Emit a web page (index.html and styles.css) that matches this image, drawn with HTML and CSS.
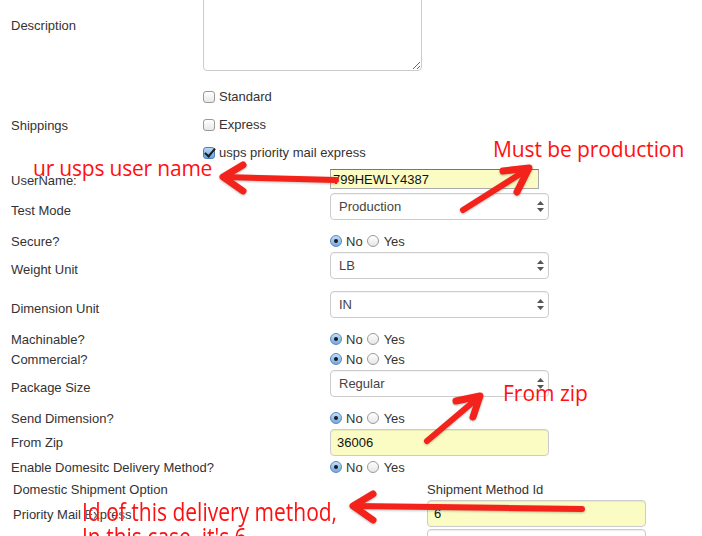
FILE: index.html
```html
<!DOCTYPE html>
<html lang="en">
<head>
  <meta charset="UTF-8" />
  <title>USPS shipping settings</title>
  <link rel="stylesheet" href="styles.css">
</head>
<body>
  <div class="page">
    <div class="basic">
      <div class="field desc">
        <span class="name">Description</span>
        <textarea></textarea>
      </div>
      <div class="field ships">
        <span class="name">Shippings</span>
        <div class="checks">
          <label class="check"><input type="checkbox"> Standard</label>
          <label class="check"><input type="checkbox"> Express</label>
          <label class="check"><input type="checkbox" checked> usps priority mail express</label>
        </div>
      </div>
    </div>

    <div class="usps">
      <div class="field user">
        <span class="name">UserName:</span>
        <input class="text" type="text" value="799HEWLY4387">
      </div>
      <div class="field sel">
        <span class="name">Test Mode</span>
        <div class="pick">
          <select><option>Production</option></select>
          <svg class="updown" width="7" height="11" viewBox="0 0 7 11"><path d="M3.5 0L7 4H0z M3.5 11L0 7h7z" fill="#555"/></svg>
        </div>
      </div>
      <div class="field yesno">
        <span class="name">Secure?</span>
        <div class="radios"><input type="radio" name="secure" checked><span>No</span><input type="radio" name="secure"><span class="yes">Yes</span></div>
      </div>
      <div class="field sel">
        <span class="name">Weight Unit</span>
        <div class="pick">
          <select><option>LB</option></select>
          <svg class="updown" width="7" height="11" viewBox="0 0 7 11"><path d="M3.5 0L7 4H0z M3.5 11L0 7h7z" fill="#555"/></svg>
        </div>
      </div>
      <div class="field sel">
        <span class="name">Dimension Unit</span>
        <div class="pick">
          <select><option>IN</option></select>
          <svg class="updown" width="7" height="11" viewBox="0 0 7 11"><path d="M3.5 0L7 4H0z M3.5 11L0 7h7z" fill="#555"/></svg>
        </div>
      </div>
      <div class="field yesno">
        <span class="name">Machinable?</span>
        <div class="radios"><input type="radio" name="mach" checked><span>No</span><input type="radio" name="mach"><span class="yes">Yes</span></div>
      </div>
      <div class="field yesno">
        <span class="name">Commercial?</span>
        <div class="radios"><input type="radio" name="comm" checked><span>No</span><input type="radio" name="comm"><span class="yes">Yes</span></div>
      </div>
      <div class="field sel">
        <span class="name">Package Size</span>
        <div class="pick">
          <select><option>Regular</option></select>
          <svg class="updown" width="7" height="11" viewBox="0 0 7 11"><path d="M3.5 0L7 4H0z M3.5 11L0 7h7z" fill="#555"/></svg>
        </div>
      </div>
      <div class="field yesno">
        <span class="name">Send Dimension?</span>
        <div class="radios"><input type="radio" name="dim" checked><span>No</span><input type="radio" name="dim"><span class="yes">Yes</span></div>
      </div>
      <div class="field zip">
        <span class="name">From Zip</span>
        <input class="text round" type="text" value="36006">
      </div>
      <div class="field yesno last">
        <span class="name">Enable Domesitc Delivery Method?</span>
        <div class="radios"><input type="radio" name="dom" checked><span>No</span><input type="radio" name="dom"><span class="yes">Yes</span></div>
      </div>
    </div>

    <div class="domestic">
      <div class="head">
        <span class="col">Domestic Shipment Option</span>
        <span>Shipment Method Id</span>
      </div>
      <div class="line">
        <span class="col">Priority Mail Express</span>
        <input class="text round" type="text" value="6">
      </div>
      <div class="line">
        <span class="col"></span>
        <input class="text round plain" type="text" value="">
      </div>
    </div>
  </div>

  <div class="notes">
    <svg class="arrows" width="702" height="536" viewBox="0 0 702 536">
      <g fill="none" stroke="#f3231b" stroke-linecap="round" stroke-linejoin="round">
        <path d="M336 180L224 177" stroke-width="6"/>
        <path d="M243 165L223 177L243 191" stroke-width="7"/>
        <path d="M463 210L528 169" stroke-width="6"/>
        <path d="M503 171L529 168L517 192" stroke-width="7"/>
        <path d="M427 441L479 397" stroke-width="6"/>
        <path d="M456 401L480 396L473 417" stroke-width="7"/>
        <path d="M582 509L355 506" stroke-width="6"/>
        <path d="M373 494L353 506L373 520" stroke-width="7"/>
      </g>
    </svg>
    <span class="note n-user">ur usps user name</span>
    <span class="note n-prod">Must be production</span>
    <span class="note n-zip">From zip</span>
    <span class="note n-id">Id of this delivery method,<br>In this case, it's 6</span>
  </div>
</body>
</html>
```

FILE: styles.css
```css
* {
  box-sizing: border-box;
}
body {
  margin: 0;
  font-family: "Liberation Sans", Arial, sans-serif;
  font-size: 13px;
  line-height: 18px;
  color: #333;
  background: #fff;
  overflow: hidden;
}
.page {
  margin-top: -9px;
  padding-left: 11px;
}
.field {
  display: flex;
}
.name {
  padding-top: 1px;
}

/* description + shipping checkboxes */
.basic .name {
  width: 192px;
}
.desc .name {
  padding-top: 26px;
}
textarea {
  width: 219px;
  height: 80px;
  margin: 0;
  border: 1px solid #ccc;
  border-radius: 4px;
  resize: vertical;
  box-shadow: inset 0 1px 1px rgba(0,0,0,0.075);
}
.ships {
  margin-top: 12px;
}
.ships .name {
  align-self: center;
}
.check {
  display: flex;
  align-items: center;
  gap: 4px;
  height: 28px;
}
input[type="checkbox"] {
  appearance: none;
  width: 12px;
  height: 12px;
  margin: 0;
  border: 1px solid #9a9a9a;
  border-radius: 3px;
  background: linear-gradient(#fff, #e8e8e8);
  position: relative;
}
input[type="checkbox"]:checked {
  border-color: #4f7fb8;
  background: linear-gradient(#b9d8f7, #6aa2e0);
}
input[type="checkbox"]:checked::after {
  content: "";
  position: absolute;
  left: 3px;
  top: -2px;
  width: 4px;
  height: 9px;
  border: solid #1c1c1c;
  border-width: 0 2px 2px 0;
  transform: rotate(40deg);
}

/* usps block */
.usps {
  margin-top: 2px;
}
.usps .name {
  width: 319px;
}
.usps .field {
  margin-bottom: 2px;
}
.user .name {
  padding-top: 3px;
  height: 20px;
}
.user {
  margin-bottom: 4px !important;
}
.sel {
  margin-bottom: 12px !important;
}
.sel .name {
  padding-top: 9px;
  height: 27px;
}
.zip .name {
  padding-top: 5px;
  height: 27px;
}
.yesno .name {
  height: 18px;
}
.last {
  margin-bottom: 4px !important;
}
.text {
  width: 209px;
  height: 20px;
  margin: 0;
  padding: 0 2px;
  border: 1px solid #aaa;
  border-top-color: #777;
  background: #fbfcc4;
  font-family: "Liberation Sans", Arial, sans-serif;
  font-size: 13px;
  color: #111;
}
.text.round {
  width: 219px;
  height: 27px;
  padding: 0 6px;
  border: 1px solid #ccc;
  border-radius: 4px;
  box-shadow: inset 0 1px 1px rgba(0,0,0,0.075);
}
.text.plain {
  background: #fff;
}
.pick {
  position: relative;
}
select {
  appearance: none;
  width: 219px;
  height: 27px;
  margin: 0;
  padding: 0 0 0 8px;
  border: 1px solid #ccc;
  border-radius: 4px;
  background: #fff;
  font-family: "Liberation Sans", Arial, sans-serif;
  font-size: 13px;
  color: #444;
  box-shadow: inset 0 1px 1px rgba(0,0,0,0.05);
}
.updown {
  position: absolute;
  right: 5px;
  top: 8px;
}
.radios {
  display: flex;
  align-items: center;
  gap: 4px;
  height: 18px;
}
.radios span {
  padding-top: 1px;
  height: 18px;
}
.radios .yes {
  margin-left: 1px;
}
input[type="radio"] {
  appearance: none;
  width: 12px;
  height: 12px;
  margin: 0;
  border: 1px solid #9a9a9a;
  border-radius: 50%;
  background: linear-gradient(#fff, #e6e6e6);
  position: relative;
}
input[type="radio"]:checked {
  border-color: #5a86bd;
  background: linear-gradient(#c4def8, #74a9e4);
}
input[type="radio"]:checked::after {
  content: "";
  position: absolute;
  left: 3px;
  top: 3px;
  width: 4px;
  height: 4px;
  border-radius: 50%;
  background: #1a1a1a;
}

/* domestic method table */
.domestic {
  padding-left: 2px;
}
.domestic .col {
  width: 414px;
}
.head {
  display: flex;
  padding-top: 1px;
  height: 18px;
}
.line {
  display: flex;
  margin-top: 2px;
}
.line .col {
  padding-top: 6px;
  height: 27px;
}

/* screenshot annotations */
.notes {
  position: absolute;
  top: 0;
  left: 0;
  width: 702px;
  height: 536px;
  pointer-events: none;
}
.arrows {
  position: absolute;
  top: 0;
  left: 0;
  filter: drop-shadow(0 1px 1px rgba(0,0,0,0.25));
}
.note {
  position: absolute;
  font-family: "Open Sans", sans-serif;
  font-size: 21px;
  line-height: 24px;
  color: #ff1010;
  white-space: nowrap;
  text-shadow: 0 0 2px #fff;
}
.n-user {
  left: 33px;
  top: 156px;
  letter-spacing: -0.2px;
}
.n-prod {
  left: 493px;
  top: 137px;
  letter-spacing: -0.1px;
}
.n-zip {
  left: 503px;
  top: 381px;
}
.n-id {
  left: 82px;
  top: 499px;
  font-size: 25px;
  line-height: 25px;
  transform: scaleX(0.84);
  transform-origin: left top;
}
```
